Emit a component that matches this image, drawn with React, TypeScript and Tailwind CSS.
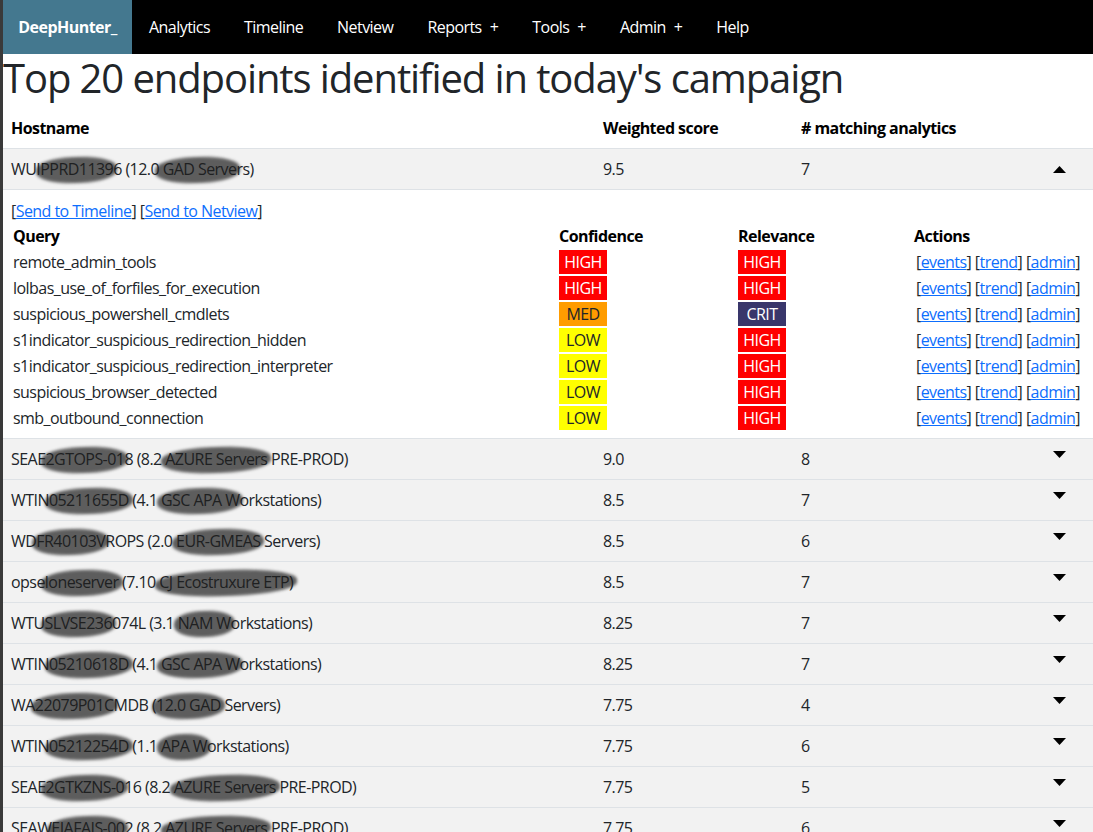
import React from "react";

const FONT = { fontFamily: '"Segoe UI", "Open Sans", "Noto Sans", sans-serif' };

const navItems: { label: string; menu?: boolean }[] = [
  { label: "Analytics" },
  { label: "Timeline" },
  { label: "Netview" },
  { label: "Reports", menu: true },
  { label: "Tools", menu: true },
  { label: "Admin", menu: true },
  { label: "Help" },
];

/** Hostname text: segments in {braces} are scribbled over (redacted) */
const hosts: { name: string; score: string; count: number }[] = [
  { name: "WUI{PPRD1139}6 (12.0{ GAD Serve}rs)", score: "9.5", count: 7 },
  { name: "SEAE{2GTOPS-01}8 (8.2 {AZURE Servers} PRE-PROD)", score: "9.0", count: 8 },
  { name: "WTIN{05211655D} (4.1 {GSC APA W}orkstations)", score: "8.5", count: 7 },
  { name: "WD{FR40103V}ROPS (2.0 {EUR-GMEAS} Servers)", score: "8.5", count: 6 },
  { name: "opse{loneserver} (7.10 {CJ Ecostruxure ETP)}", score: "8.5", count: 7 },
  { name: "WTU{SLVSE236}074L (3.1 {NAM W}orkstations)", score: "8.25", count: 7 },
  { name: "WTIN{05210618D} (4.1 {GSC APA W}orkstations)", score: "8.25", count: 7 },
  { name: "WA{22079P01C}MDB ({12.0 GAD} Servers)", score: "7.75", count: 4 },
  { name: "WTIN{05212254D} (1.1 {APA W}orkstations)", score: "7.75", count: 6 },
  { name: "SEAE{2GTKZNS-0}16 (8.2 {AZURE Servers} PRE-PROD)", score: "7.75", count: 5 },
  { name: "SEAW{EIAFAIS-00}2 (8.2 {AZURE Servers} PRE-PROD)", score: "7.75", count: 6 },
];

type Level = "HIGH" | "MED" | "LOW" | "CRIT";

const queries: { q: string; conf: Level; rel: Level }[] = [
  { q: "remote_admin_tools", conf: "HIGH", rel: "HIGH" },
  { q: "lolbas_use_of_forfiles_for_execution", conf: "HIGH", rel: "HIGH" },
  { q: "suspicious_powershell_cmdlets", conf: "MED", rel: "CRIT" },
  { q: "s1indicator_suspicious_redirection_hidden", conf: "LOW", rel: "HIGH" },
  { q: "s1indicator_suspicious_redirection_interpreter", conf: "LOW", rel: "HIGH" },
  { q: "suspicious_browser_detected", conf: "LOW", rel: "HIGH" },
  { q: "smb_outbound_connection", conf: "LOW", rel: "HIGH" },
];

const levelClass: Record<Level, string> = {
  HIGH: "bg-[#ff0000] text-white",
  MED: "bg-[#ff9c00] text-[#212529]",
  LOW: "bg-[#ffff00] text-[#212529]",
  CRIT: "bg-[#39366b] text-white",
};

function Badge({ level }: { level: Level }) {
  return (
    <span className={`inline-flex h-6 w-12 items-center justify-center ${levelClass[level]}`}>{level}</span>
  );
}

function Hostname({ text }: { text: string }) {
  const parts = text.split(/[{}]/);
  return (
    <span>
      {parts.map((p, i) =>
        i % 2 === 1 ? (
          <span key={i} className="relative">
            {p}
            <span className="pointer-events-none absolute -left-1 -right-1 -top-[1px] -bottom-[3px] -rotate-2 rounded-[45%] bg-[#1e1e1e]/70 blur-[1.5px]" />
          </span>
        ) : (
          <span key={i}>{p}</span>
        )
      )}
    </span>
  );
}

function Caret({ up }: { up?: boolean }) {
  return (
    <svg width="13" height="7" viewBox="0 0 13 7" aria-hidden="true">
      <polygon points={up ? "0,7 13,7 6.5,0" : "0,0 13,0 6.5,7"} fill="#000" />
    </svg>
  );
}

function Link({ children }: { children: React.ReactNode }) {
  return (
    <>
      [<a href="#" className="text-[#0d6efd] underline">{children}</a>]
    </>
  );
}

const rowCols = "grid grid-cols-[592px_198px_1fr_60px]";

export default function App() {
  return (
    <div
      style={FONT}
      className="min-h-screen border-l-[3px] border-[#3a3a3a] bg-white text-base tracking-[-0.55px] text-[#212529]"
    >
      {/* Navbar */}
      <nav className="flex h-[54px] items-stretch bg-black text-white">
        <div className="flex w-[129px] items-center justify-center bg-[#44788f] font-bold">DeepHunter_</div>
        <div className="flex items-center">
          {navItems.map((n) => (
            <span key={n.label} className="px-[17px]">
              {n.label}
              {n.menu ? <span className="ml-[8px]">+</span> : null}
            </span>
          ))}
        </div>
      </nav>

      <h1 className="mb-[6px] text-[40px] font-medium leading-[1.2] tracking-[-1.1px]">
        Top 20 endpoints identified in today's campaign
      </h1>

      {/* Header row */}
      <div className={`${rowCols} h-[41px] items-center border-b border-[#dee2e6] font-bold text-black`}>
        <div className="pl-2">Hostname</div>
        <div className="pl-2">Weighted score</div>
        <div className="pl-2"># matching analytics</div>
        <div />
      </div>

      {hosts.map((h, idx) => (
        <React.Fragment key={h.name}>
          <div className={`${rowCols} h-[41px] items-center border-b border-[#dee2e6] bg-[#f2f2f2]`}>
            <div className="pl-2">
              <Hostname text={h.name} />
            </div>
            <div className="pl-2">{h.score}</div>
            <div className="pl-2">{h.count}</div>
            <div className={`flex justify-end pr-[27px] ${idx === 0 ? "" : "-mt-[10px]"}`}>
              <Caret up={idx === 0} />
            </div>
          </div>

          {idx === 0 ? (
            <div className="border-b border-[#dee2e6] pb-[7px] pl-2 pt-[9px]">
              <div className="leading-6">
                <Link>Send to Timeline</Link> <Link>Send to Netview</Link>
              </div>
              <div className="grid grid-cols-[546px_179px_176px_1fr]">
                <div className="flex h-[26px] items-center pl-[2px] font-bold text-black">Query</div>
                <div className="flex h-[26px] items-center pl-[2px] font-bold text-black">Confidence</div>
                <div className="flex h-[26px] items-center pl-[2px] font-bold text-black">Relevance</div>
                <div className="flex h-[26px] items-center pl-[2px] font-bold text-black">Actions</div>
                {queries.map((q) => (
                  <React.Fragment key={q.q}>
                    <div className="flex h-[26px] items-center pl-[2px]">{q.q}</div>
                    <div className="flex h-[26px] items-center pl-[2px]">
                      <Badge level={q.conf} />
                    </div>
                    <div className="flex h-[26px] items-center pl-[2px]">
                      <Badge level={q.rel} />
                    </div>
                    <div className="flex h-[26px] items-center pl-[4px]">
                      <span>
                        <Link>events</Link> <Link>trend</Link> <Link>admin</Link>
                      </span>
                    </div>
                  </React.Fragment>
                ))}
              </div>
            </div>
          ) : null}
        </React.Fragment>
      ))}
    </div>
  );
}
